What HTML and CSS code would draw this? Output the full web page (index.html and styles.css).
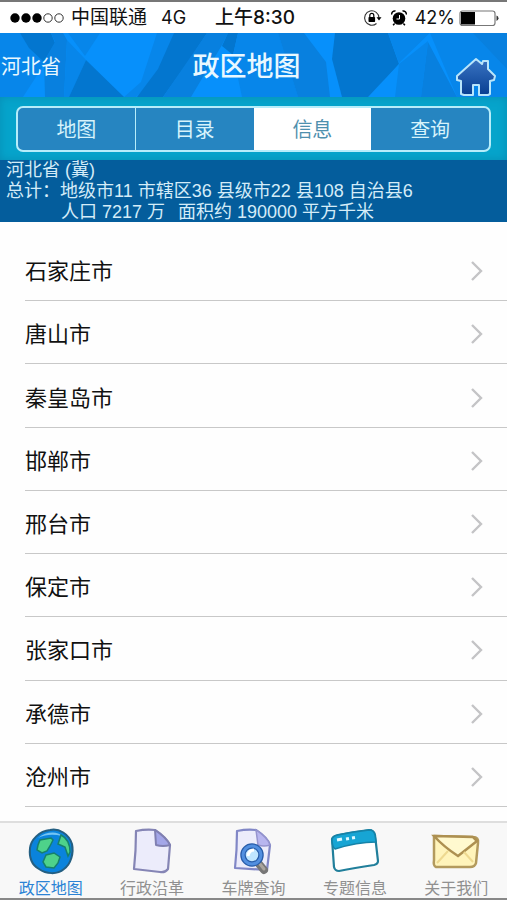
FILE: index.html
```html
<!DOCTYPE html>
<html lang="zh-CN">
<head>
<meta charset="utf-8">
<meta name="viewport" content="width=device-width, initial-scale=1">
<title>政区地图</title>
<link rel="stylesheet" href="styles.css">
</head>
<body>
<div class="status">
  <svg class="signal" width="54" height="12" viewBox="0 0 54 12" aria-hidden="true"><circle cx="5" cy="6" r="4.7"/><circle cx="16" cy="6" r="4.7"/><circle cx="27" cy="6" r="4.7"/><g fill="none" stroke="#333" stroke-width="1"><circle cx="38" cy="6" r="4.2"/><circle cx="49" cy="6" r="4.2"/></g></svg>
  <span class="carrier">中国联通</span>
  <span class="network">4G</span>
  <span class="time">上午8:30</span>
  <div class="status-right">
    <svg width="20" height="18" viewBox="0 0 20 18" aria-hidden="true"><path d="M13.500 14.500A7.200 7.200 0 1 1 16 9" fill="none" stroke="#333" stroke-width="1.100"/><path d="M13.500 8.200h5l-2.500 3.300z"/><rect x="5.500" y="8" width="6.600" height="5" rx=".7"/><path d="M6.800 8V6.400a2 2 0 0 1 4 0V8" fill="none" stroke="#000" stroke-width="1.200"/></svg>
    <svg width="16" height="18" viewBox="0 0 16 18" aria-hidden="true"><circle cx="8" cy="9.500" r="6.300"/><path d="M.8 5.500A3 3 0 0 1 4.500 2M11.500 2a3 3 0 0 1 3.700 3.500M3.600 14.500l-1.500 1.800M12.400 14.500l1.500 1.800" fill="none" stroke="#000" stroke-width="1.500"/><path d="M8.500 6v4H5.500" fill="none" stroke="#fff" stroke-width="1"/></svg>
    <span class="percent">42%</span>
    <svg width="40" height="18" viewBox="0 0 40 18" aria-hidden="true"><rect x="1" y="2" width="35" height="14.500" rx="2.500" fill="#fff" stroke="#777" stroke-width="1.200"/><path d="M2 3h14v12.500H2z"/><path d="M37.500 6.500q2 .8 2 2.700t-2 2.700z" fill="#333"/></svg>
  </div>
</div>
<header class="header">
  <svg class="facets" viewBox="0 0 507 64" preserveAspectRatio="none" aria-hidden="true">
    <path fill="#0790fb" d="M0 0h507v64H0z"/>
    <path fill="#0786ea" d="M0 0h20l25 30-22 34H0z"/>
    <path fill="#0376cf" d="M20 0h31l4 10-11 19-15-14z"/>
    <path fill="#0880df" d="M51 0h12l4 7-3 57H45L44 28 55 9z"/>
    <path fill="#0786ea" d="M67 7l19 20-17 37h-5z"/>
    <path fill="#0376cf" d="M86 27l38 37H69z"/>
    <path fill="#0786ea" d="M68 0h32L85 23z"/>
    <path fill="#0786ea" d="M157 0h17l-11 38-27 26h-12l17-15z"/>
    <path fill="#0376cf" d="M174 0h33l-19 29-25 35h-26l21-28z"/>
    <path fill="#0880df" d="M207 0h21l-6 12-31 52h-28z"/>
    <path fill="#0376cf" d="M228 0h10l-5 22-11-9z"/>
    <path fill="#0786ea" d="M238 0h40l20 64h-56l-9-42z"/>
    <path fill="#0880df" d="M278 0h26l22 29 4 35h-32z"/>
    <path fill="#0376cf" d="M335 0h53l11 31-31 33h-26L332 26z"/>
    <path fill="#0786ea" d="M388 0h42l-31 30z"/>
    <path fill="#0790fb" d="M430 0h21l-6 64h-75l29-33z"/>
    <path fill="#0786ea" d="M399 31l29-23-7 56h-26z"/>
    <path fill="#0880df" d="M428 9l29 55h-36z"/>
    <path fill="#0786ea" d="M430 0h77v64h-50z"/>
    <path fill="#0880df" d="M473 0h34v36z"/>
  </svg>
  <button class="province" type="button">河北省</button>
  <h1>政区地图</h1>
  <button class="home" type="button" aria-label="首页">
    <svg width="42" height="40" viewBox="0 0 42 40" aria-hidden="true"><defs><linearGradient id="roof" x2="0" y2="1"><stop stop-color="#3a75c4"/><stop offset="1" stop-color="#083f91"/></linearGradient></defs><path d="M21 2l6 5 1-3h5v8l7 7-1 4-4 1v13l-2 1h-9V28h-6v10H9l-3-1V24l-4-1v-4z" fill="url(#roof)" stroke="#b9e5fb" stroke-width="2" stroke-linejoin="round"/></svg>
  </button>
</header>
<nav class="segment-bar" aria-label="视图">
  <div class="segments">
    <button type="button">地图</button>
    <button type="button">目录</button>
    <button type="button" class="selected">信息</button>
    <button type="button">查询</button>
  </div>
</nav>
<section class="summary">
  <p>河北省 (冀)</p>
  <p>总计：地级市11 市辖区36 县级市22 县108 自治县6</p>
  <p class="indent">人口 7217 万 <span>面积约 190000 平方千米</span></p>
</section>
<main class="cities">
  <a href="#">石家庄市<svg class="chevron" viewBox="0 0 14 22" aria-hidden="true"><path d="M2 2l9 9-9 9"/></svg></a>
  <a href="#">唐山市<svg class="chevron" viewBox="0 0 14 22" aria-hidden="true"><path d="M2 2l9 9-9 9"/></svg></a>
  <a href="#">秦皇岛市<svg class="chevron" viewBox="0 0 14 22" aria-hidden="true"><path d="M2 2l9 9-9 9"/></svg></a>
  <a href="#">邯郸市<svg class="chevron" viewBox="0 0 14 22" aria-hidden="true"><path d="M2 2l9 9-9 9"/></svg></a>
  <a href="#">邢台市<svg class="chevron" viewBox="0 0 14 22" aria-hidden="true"><path d="M2 2l9 9-9 9"/></svg></a>
  <a href="#">保定市<svg class="chevron" viewBox="0 0 14 22" aria-hidden="true"><path d="M2 2l9 9-9 9"/></svg></a>
  <a href="#">张家口市<svg class="chevron" viewBox="0 0 14 22" aria-hidden="true"><path d="M2 2l9 9-9 9"/></svg></a>
  <a href="#">承德市<svg class="chevron" viewBox="0 0 14 22" aria-hidden="true"><path d="M2 2l9 9-9 9"/></svg></a>
  <a href="#">沧州市<svg class="chevron" viewBox="0 0 14 22" aria-hidden="true"><path d="M2 2l9 9-9 9"/></svg></a>
</main>
<nav class="tabs" aria-label="主导航">
  <a href="#" class="active">
    <svg viewBox="0 0 50 48" aria-hidden="true"><path d="M24 3C33 1 43 7 46 17c2 9-1 20-8 25-7 6-18 5-25 0C6 38 3 30 4 21 5 13 13 4 24 3z" fill="#0a83dc" stroke="#245f82" stroke-width="2"/><path d="M12 11C20 4 32 4 36 9c-8-2-16-2-24 2z" fill="#74c4f3"/><path d="M14 13l11-2 2 2-3 6-3 5-5 2-5-3 1-5z" fill="#4ed28a" stroke="#16806c" stroke-width="1.500"/><path d="M20 28l8-2 6 4-2 6-4 5-8-1-3-5z" fill="#4ed28a" stroke="#16806c" stroke-width="1.500"/><path d="M35 8c6 3 9 9 9 17l-2 4-3-9-7-3z" fill="#4ed28a" stroke="#16806c" stroke-width="1.500"/></svg>
    <span>政区地图</span>
  </a>
  <a href="#">
    <svg viewBox="0 0 50 48" aria-hidden="true"><path d="M9 4q10-2 19-1c6 4 12 9 15 15l-2 24q-3 4-8 3L7 42q2-18 2-38z" fill="#ececfb" stroke="#8585b5" stroke-width="2.200" stroke-linejoin="round"/><path d="M28 3l1 15q7 2 14 0C40 12 34 7 28 3z" fill="#a3a6e8" stroke="#8080b2" stroke-width="2" stroke-linejoin="round"/></svg>
    <span>行政沿革</span>
  </a>
  <a href="#">
    <svg viewBox="0 0 50 48" aria-hidden="true"><path d="M9 4q10-2 19-1c6 4 12 9 14 15l-3 25-32-2q2-18 2-37z" fill="#ececfb" stroke="#8187c6" stroke-width="2.200" stroke-linejoin="round"/><path d="M28 3l2 15q6 2 12 0C40 12 34 7 28 3z" fill="#b8b6ef" stroke="#9694ce" stroke-width="1.500"/><path d="M31 37l5 6" stroke="#777" stroke-width="8" stroke-linecap="round"/><path d="M32 37l4 5" stroke="#aaa49d" stroke-width="3" stroke-linecap="round"/><circle cx="24" cy="28" r="9" fill="#bfe5ff" stroke="#285ca9" stroke-width="5.500"/><circle cx="24" cy="28" r="9" fill="none" stroke="#528fe0" stroke-width="3"/><path d="M20 29q1-6 6-6" fill="none" stroke="#fff" stroke-width="3"/></svg>
    <span>车牌查询</span>
  </a>
  <a href="#">
    <svg viewBox="0 0 50 48" aria-hidden="true"><path d="M2 12q1-3 6-4Q22 5 39 3q5 0 6 5l3 26q0 3-4 4Q24 41 9 44q-4 0-5-4z" fill="#fff" stroke="#217f9b" stroke-width="2.200"/><path d="M2 12q1-3 6-4Q22 5 39 3q5 0 6 5l1 7q-19 0-41 7-3-2-3-10z" fill="#17a5d4" stroke="#1583a8" stroke-width="1.500"/><path d="M7 13l5-1M16 12l3-.5M22 11l3-.5" stroke="#e1faff" stroke-width="3"/></svg>
    <span>专题信息</span>
  </a>
  <a href="#">
    <svg viewBox="0 0 50 48" aria-hidden="true"><path d="M3 9l39 1q6 0 5 6l-2 20q-1 4-6 4-17 0-34 0-3-1-2-7z" fill="#fff4bb" stroke="#b39a5d" stroke-width="2.500" stroke-linejoin="round"/><path d="M3 9l39 1 4 4q-10 8-19 15Q13 20 3 9z" fill="#fff9cf" stroke="#ad9051" stroke-width="2.500"/><path d="M6 36l11-12M33 25l9 10" stroke="#eed990" stroke-width="2"/></svg>
    <span>关于我们</span>
  </a>
</nav>
</body>
</html>
```
FILE: styles.css
```css
* { box-sizing: border-box; }
body {
  margin: 0;
  min-height: 100vh;
  display: flex;
  flex-direction: column;
  background: #fefefe;
  color: #111;
  font-family: Inter, "Noto Sans CJK SC", sans-serif;
}
button { font: inherit; border: 0; padding: 0; background: none; color: inherit; cursor: pointer; }
a { color: inherit; text-decoration: none; }
p, h1 { margin: 0; }
svg { display: block; flex: none; }

.status {
  height: 33px;
  border-top: 2px solid #777;
  padding: 0 8px 0 10px;
  display: flex;
  align-items: center;
  background: #fff;
  font-size: 19px;
  line-height: 31px;
  white-space: nowrap;
}
.carrier { margin-left: 7px; }
.network { margin-left: 14px; font-size: 18px; }
.time { margin-left: 29px; font-weight: 500; }
.status-right { margin-left: auto; display: flex; align-items: center; gap: 8px; }
.percent { font-size: 18px; }
.status-right svg:last-child { margin-left: -4px; }

.header {
  position: relative;
  height: 64px;
  padding-top: 4px;
  display: grid;
  grid-template-columns: 1fr auto 1fr;
  align-items: center;
  color: #e9f8ff;
}
.facets { position: absolute; inset: 0; width: 100%; height: 100%; }
.header > :not(.facets) { position: relative; }
.province { justify-self: start; padding-left: 1px; font-size: 20px; line-height: 30px; }
.header h1 { padding-right: 14px; font-size: 27px; line-height: 40px; font-weight: 500; }
.home { justify-self: end; align-self: end; padding-right: 10px; }

.segment-bar {
  height: 63px;
  padding: 9px 16px 8px;
  background: #06a4cb;
  box-shadow: inset 0 0 8px #078db5;
}
.segments {
  height: 100%;
  display: grid;
  grid-template-columns: repeat(4, 1fr);
  border: 2px solid #b6edfa;
  border-radius: 7px;
  overflow: hidden;
  background: #2685c1;
}
.segments button { padding-top: 2px; color: #d6f3fb; font-size: 20px; line-height: 30px; }
.segments button:first-child { border-right: 1px solid #b6edfa; }
.segments .selected { background: #fff; color: #4f90ae; }

.summary {
  height: 62px;
  padding: 0 6px;
  background: #045d9c;
  color: #d4ecf8;
  font-family: "Liberation Sans", "Noto Sans CJK SC", sans-serif;
  font-size: 18px;
  line-height: 21px;
  white-space: nowrap;
}
.indent { padding-left: 55px; }
.indent span { margin-left: 8px; }

.cities {
  flex: 1;
  padding: 16px 0 14px 25px;
  display: grid;
  grid-auto-rows: 1fr;
}
.cities a {
  display: flex;
  align-items: center;
  justify-content: space-between;
  padding: 4px 23px 0 0;
  border-bottom: 1px solid #c8c8c8;
  font-size: 22px;
  line-height: 32px;
}
.chevron { width: 14px; height: 22px; fill: none; stroke: #c4c4c6; stroke-width: 2.4; }

.tabs {
  height: 79px;
  display: grid;
  grid-template-columns: repeat(5, 1fr);
  border-top: 2px solid #dedede;
  border-bottom: 2px solid #888;
  background: #f8f8f8;
  color: #909090;
}
.tabs a {
  display: flex;
  flex-direction: column;
  align-items: center;
  padding-top: 4px;
  font-size: 16px;
  line-height: 26px;
}
.tabs svg { width: 50px; height: 48px; }
.tabs .active { color: #2b83d5; }
```
